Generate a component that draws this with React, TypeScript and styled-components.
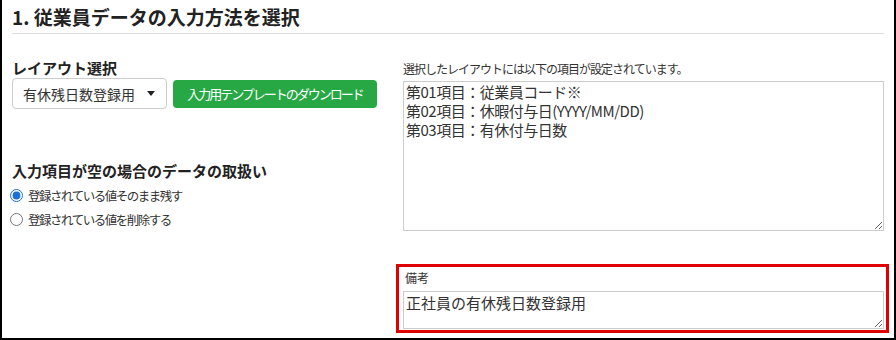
import React from 'react';
import styled, { createGlobalStyle } from 'styled-components';

const GlobalStyle = createGlobalStyle`
  html, body {
    margin: 0;
    padding: 0;
    background: #fff;
  }
  body {
    font-family: "Noto Sans CJK JP", "Noto Sans", sans-serif;
    color: #333;
  }
`;

const Frame = styled.div`
  width: 896px;
  height: 340px;
  box-sizing: border-box;
  border: 2px solid #000;
  border-top: 0;
  padding: 0 10px;
  overflow: hidden;
`;

const Heading = styled.h1`
  margin: 0;
  padding: 5px 0 4px;
  font-size: 19px;
  line-height: 24px;
  font-weight: bold;
  color: #222;
  border-bottom: 1px solid #ddd;
`;

const Body = styled.div`
  display: grid;
  grid-template-columns: 1fr 481px;
  column-gap: 12px;
  padding-top: 25px;
`;

const Column = styled.div`
  display: flex;
  flex-direction: column;
`;

const SectionLabel = styled.div<{ $gap?: number }>`
  font-size: 15px;
  line-height: 18px;
  font-weight: bold;
  color: #222;
  margin-top: ${(p) => p.$gap ?? 0}px;
  margin-bottom: 1px;
`;

const Row = styled.div`
  display: flex;
  align-items: center;
  gap: 6px;
`;

const SelectBox = styled.div`
  width: 155px;
  height: 31px;
  box-sizing: border-box;
  border: 1px solid #ccc;
  border-radius: 4px;
  padding: 0 10px;
  display: flex;
  align-items: center;
  justify-content: space-between;
  font-size: 14px;
  color: #333;
  background: #fff;
`;

const Caret = styled.span`
  width: 0;
  height: 0;
  border-left: 4px solid transparent;
  border-right: 4px solid transparent;
  border-top: 5px solid #222;
  margin-right: 1px;
`;

const GreenButton = styled.button`
  height: 28px;
  width: 204px;
  border: 0;
  border-radius: 4px;
  background: #28a745;
  color: #fff;
  font-family: inherit;
  font-size: 13px;
  letter-spacing: -2px;
  padding: 0;
  cursor: pointer;
`;

const RadioList = styled.div`
  display: flex;
  flex-direction: column;
  margin-top: 2px;
`;

const RadioRow = styled.label`
  display: flex;
  align-items: center;
  height: 24px;
  gap: 5px;
  font-size: 12.5px;
  letter-spacing: -1.5px;
  color: #333;
`;

const Radio = styled.input`
  margin: 0 0 0 -2px;
  width: 13px;
  height: 13px;
  accent-color: #1a6fd9;
`;

const Hint = styled.div`
  font-size: 12px;
  line-height: 20px;
  letter-spacing: -1px;
  color: #333;
  margin-bottom: 2px;
`;

const Area = styled.textarea<{ $height: number }>`
  display: block;
  width: 100%;
  height: ${(p) => p.$height}px;
  box-sizing: border-box;
  border: 1px solid #ccc;
  border-radius: 0;
  padding: 0 2px;
  margin: 0;
  font-family: "Noto Sans CJK JP", "Noto Sans", sans-serif;
  font-size: 15px;
  line-height: 19px;
  letter-spacing: -0.5px;
  color: #333;
  background: #fff;
  outline: none;
`;

const RemarkGroup = styled.div`
  margin: 33px -5px 0 -7px;
  padding: 3px 2px 1px 4px;
  border: 3px solid #e00000;
`;

const RemarkLabel = styled.div`
  font-size: 12px;
  line-height: 16px;
  padding: 0 2px;
  color: #333;
  margin-bottom: 5px;
`;

const RemarkArea = styled(Area)`
  padding: 1px 2px;
  line-height: 20px;
  letter-spacing: 0;
`;

const layoutItems = [
  '第01項目：従業員コード※',
  '第02項目：休暇付与日(YYYY/MM/DD)',
  '第03項目：有休付与日数',
];

const App: React.FC = () => {
  return (
    <>
      <GlobalStyle />
      <Frame>
        <Heading>1. 従業員データの入力方法を選択</Heading>
        <Body>
          <Column>
            <SectionLabel>レイアウト選択</SectionLabel>
            <Row>
              <SelectBox>
                <span>有休残日数登録用</span>
                <Caret />
              </SelectBox>
              <GreenButton>入力用テンプレートのダウンロード</GreenButton>
            </Row>

            <SectionLabel $gap={53}>入力項目が空の場合のデータの取扱い</SectionLabel>
            <RadioList>
              <RadioRow>
                <Radio type="radio" name="empty" defaultChecked />
                登録されている値そのまま残す
              </RadioRow>
              <RadioRow>
                <Radio type="radio" name="empty" />
                登録されている値を削除する
              </RadioRow>
            </RadioList>
          </Column>

          <Column>
            <Hint>選択したレイアウトには以下の項目が設定されています。</Hint>
            <Area $height={150} readOnly value={layoutItems.join('\n')} />
            <RemarkGroup>
              <RemarkLabel>備考</RemarkLabel>
              <RemarkArea $height={38} readOnly value="正社員の有休残日数登録用" />
            </RemarkGroup>
          </Column>
        </Body>
      </Frame>
    </>
  );
};

export default App;
